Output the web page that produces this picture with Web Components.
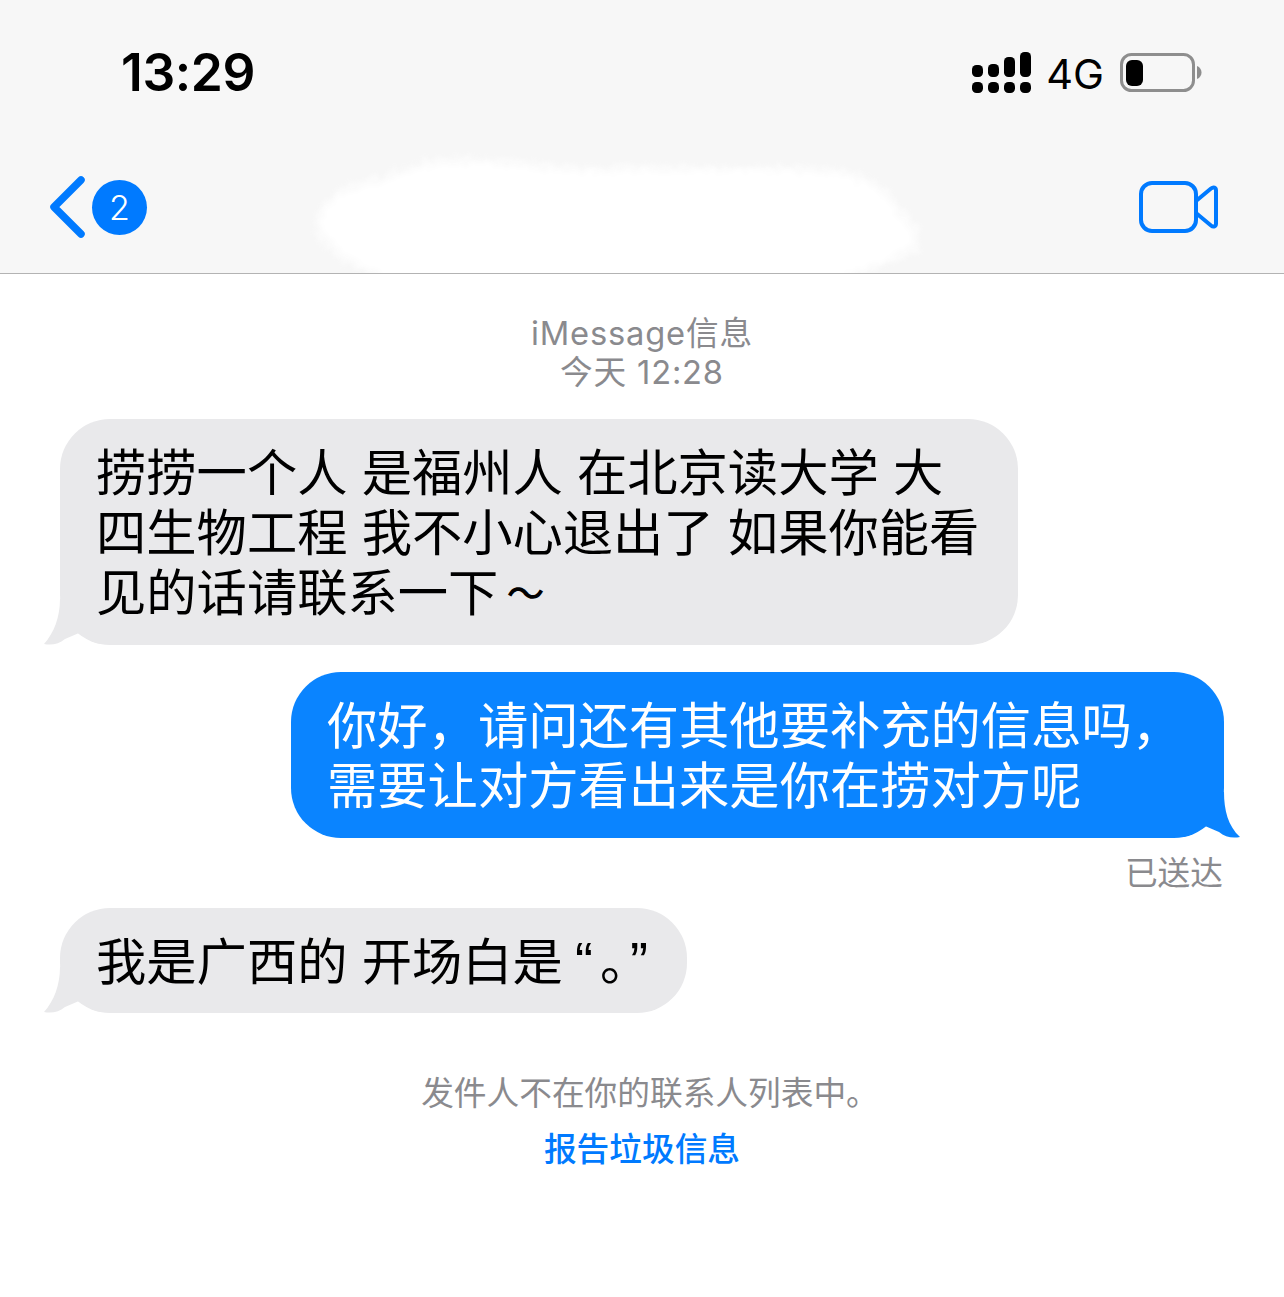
<!DOCTYPE html>
<html lang="zh">
<head>
<meta charset="utf-8">
<title>iMessage</title>
<style>
  html, body { margin: 0; padding: 0; background: #fff; }
  body { font-family: Inter, "Noto Sans CJK SC", sans-serif; width: 1284px; height: 1297px; overflow: hidden; }
  .q { font-family: "Liberation Sans", sans-serif; font-size: 54px; line-height: 1; }
  .q-open { margin: 0 7px 0 -2px; }
  .q-close { margin-left: 5px; }
  .wave { font-size: 38px; font-weight: 500; line-height: 1; margin-left: 8px; vertical-align: 4px; }
</style>
</head>
<body>
<imsg-screen>
  <imsg-header slot="header" time="13:29" badge="2"></imsg-header>
  <chat-note tone="first">iMessage信息<br>今天 12:28</chat-note>
  <chat-bubble side="in" gap="26" width="958">捞捞一个人 是福州人 在北京读大学 大<br>四生物工程 我不小心退出了 如果你能看<br>见的话请联系一下<span class="wave">～</span></chat-bubble>
  <chat-bubble side="out" gap="27" width="933">你好，请问还有其他要补充的信息吗，<br>需要让对方看出来是你在捞对方呢</chat-bubble>
  <chat-note tone="status">已送达</chat-note>
  <chat-bubble side="in" gap="15" width="627" height="105">我是广西的 开场白是 <span class="q q-open">“</span>。<span class="q q-close">”</span></chat-bubble>
  <chat-note tone="foot">发件人不在你的联系人列表中。</chat-note>
  <chat-note tone="link">报告垃圾信息</chat-note>
</imsg-screen>

<script>
const FONT = 'Inter, "Noto Sans CJK SC", sans-serif';

class ImsgScreen extends HTMLElement {
  constructor() {
    super();
    this.attachShadow({ mode: 'open' }).innerHTML = `
      <style>
        :host { display: block; width: 1284px; height: 1297px; background: #fff; font-family: ${FONT}; }
        main { display: flex; flex-direction: column; }
      </style>
      <slot name="header"></slot>
      <main><slot></slot></main>`;
  }
}

class ImsgHeader extends HTMLElement {
  constructor() {
    super();
    const time = this.getAttribute('time');
    const badge = this.getAttribute('badge');
    this.attachShadow({ mode: 'open' }).innerHTML = `
      <style>
        :host { display: block; position: relative; height: 273px; background: #f7f7f7; border-bottom: 1px solid #b3b3b3; overflow: hidden; }
        .status { display: flex; align-items: center; height: 146px; padding: 0 82px 0 121px; }
        .time { font-size: 51.500px; font-weight: 600; letter-spacing: -.4px; color: #000; margin-right: auto; position: relative; top: -1px; }
        .net { font-size: 41.500px; color: #000; margin: 2px 16px 0 14px; }
        .nav { display: flex; align-items: center; height: 122px; padding: 0 64px 0 48px; }
        .badge { display: flex; align-items: center; justify-content: center; width: 55px; height: 55px; margin-left: 4px; border-radius: 50%; background: #007aff; color: #fff; font-size: 34px; font-weight: 300; }
        .video { margin: 2px 0 0 auto; }
        svg { display: block; }
        .smear { position: absolute; left: 310px; top: 150px; }
      </style>
      <div class="status">
        <span class="time">${time}</span>
        <svg width="60" height="42" viewBox="0 0 60 42" fill="#000">
          <rect x="0" y="13" width="11" height="12" rx="4.500"/><rect x="16" y="12" width="11" height="13" rx="4.500"/>
          <rect x="32" y="5" width="11" height="20" rx="4.500"/><rect x="48" y="0" width="11" height="25" rx="4.500"/>
          <rect x="0" y="30" width="11" height="11" rx="4.500"/><rect x="16" y="30" width="11" height="11" rx="4.500"/>
          <rect x="32" y="30" width="11" height="11" rx="4.500"/><rect x="48" y="30" width="11" height="11" rx="4.500"/>
        </svg>
        <span class="net">4G</span>
        <svg width="82" height="40" viewBox="0 0 82 40">
          <rect x="1.500" y="1.500" width="72" height="36" rx="10" fill="none" stroke="#8e8e8e" stroke-width="3"/>
          <rect x="6" y="7" width="17" height="26" rx="6" fill="#000"/>
          <path d="M77 13 C80 14 81.500 17 81.500 19.500 C81.500 22 80 25 77 26Z" fill="#8e8e8e"/>
        </svg>
      </div>
      <div class="nav">
        <svg width="40" height="64" viewBox="0 0 40 64" fill="none" stroke="#007aff" stroke-width="7.500" stroke-linecap="round" stroke-linejoin="round">
          <path d="M33 5 L6 32 L33 59"/>
        </svg>
        <span class="badge">${badge}</span>
        <svg class="video" width="82" height="56" viewBox="0 0 82 56" fill="none" stroke="#007aff" stroke-width="4" stroke-linejoin="round">
          <rect x="3" y="3" width="55" height="48" rx="11"/>
          <path d="M58 21 L73 8.500 C75.500 6.500 78 7.500 78 10.500 V43.500 C78 46.500 75.500 47.500 73 45.500 L58 33"/>
        </svg>
      </div>
      <svg class="smear" width="620" height="130" viewBox="0 0 620 130" aria-hidden="true">
        <defs>
          <filter id="rough" x="-5%" y="-15%" width="110%" height="130%">
            <feTurbulence type="fractalNoise" baseFrequency="0.16" numOctaves="3" seed="4" result="n"/>
            <feDisplacementMap in="SourceGraphic" in2="n" scale="14" xChannelSelector="R" yChannelSelector="G"/>
            <feGaussianBlur stdDeviation="2.200"/>
          </filter>
        </defs>
        <path filter="url(#rough)" fill="#fff" opacity=".55" d="M6 70 C14 40 46 30 72 26 C100 14 125 4 170 7 C230 12 270 20 330 15 C400 17 470 13 532 19 C568 26 582 42 592 60 C608 70 616 90 606 102 C580 114 558 122 534 130 L68 130 C56 120 28 112 21 102 C11 92 2 82 6 70Z"/>
        <path filter="url(#rough)" fill="#fff" d="M12 68 C20 44 52 36 77 32 C102 20 127 11 170 14 C230 18 270 26 330 21 C400 23 470 19 528 25 C562 31 576 46 586 64 C600 74 608 90 598 98 C576 110 553 118 526 130 L76 130 C64 116 36 108 29 98 C19 88 8 80 12 68Z"/>
      </svg>`;
  }
}

class ChatBubble extends HTMLElement {
  constructor() {
    super();
    const side = this.getAttribute('side');
    const tail = side === 'in'
      ? `<svg class="tail" width="56" height="46" viewBox="0 0 56 46"><path fill="#e9e9eb" d="M16 0 C16 18 10 34 0 45 C8 46.500 15 45 21 40 L35 34 C40 38 48 43 56 45 L56 0Z"/></svg>`
      : `<svg class="tail" width="56" height="46" viewBox="0 0 56 46"><path fill="#0a84ff" d="M40 0 C40 18 44 34 56 45 C48 46.500 41 45 35 40 L21 34 C16 38 8 43 0 45 L0 0Z"/></svg>`;
    const h = this.getAttribute('height');
    this.attachShadow({ mode: 'open' }).innerHTML = `
      <style>
        :host { display: flex; justify-content: ${side === 'in' ? 'flex-start' : 'flex-end'}; padding: 0 60px; margin-top: ${this.getAttribute('gap') || 0}px; }
        .bubble { position: relative; box-sizing: border-box; width: ${this.getAttribute('width')}px; ${h ? `height: ${h}px;` : ''} padding: 24px 0 22px 36px; border-radius: 50px; font-size: 50.300px; line-height: 60px; white-space: nowrap;
          background: ${side === 'in' ? '#e9e9eb' : '#0a84ff'}; color: ${side === 'in' ? '#000' : '#fff'}; }
        .tail { position: absolute; bottom: 0; ${side === 'in' ? 'left: -16px' : 'right: -16px'}; }
        .text { position: relative; }
      </style>
      <div class="bubble">${tail}<span class="text"><slot></slot></span></div>`;
  }
}

class ChatNote extends HTMLElement {
  constructor() {
    super();
    const tones = {
      first: 'text-align:center;color:#8a8a8e;line-height:39px;padding:40px 0 1px;letter-spacing:.8px',
      status: 'text-align:right;color:#8a8a8e;line-height:40px;padding:15px 61px 0 0',
      foot: 'text-align:center;color:#8a8a8e;line-height:40px;padding:60px 0 0 16px',
      link: 'text-align:center;color:#007aff;line-height:40px;padding-top:16px;font-weight:500',
    };
    this.attachShadow({ mode: 'open' }).innerHTML = `
      <style>:host { display: block; font-size: 32.700px; ${tones[this.getAttribute('tone')]} }</style>
      <slot></slot>`;
  }
}

customElements.define('imsg-screen', ImsgScreen);
customElements.define('imsg-header', ImsgHeader);
customElements.define('chat-bubble', ChatBubble);
customElements.define('chat-note', ChatNote);
</script>
</body>
</html>
